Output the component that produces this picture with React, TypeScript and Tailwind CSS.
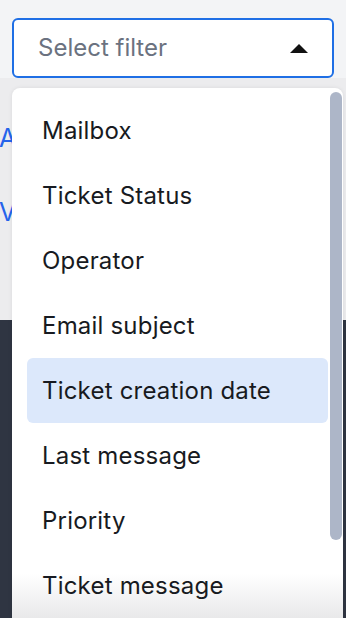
const OPTIONS = [
  "Mailbox",
  "Ticket Status",
  "Operator",
  "Email subject",
  "Ticket creation date",
  "Last message",
  "Priority",
  "Ticket message",
];

const ACTIVE = 4;

export default function App() {
  return (
    <div
      className="relative w-[346px] h-[618px] overflow-hidden bg-[#f3f4f6]"
      style={{ fontFamily: "Inter, 'Noto Sans', sans-serif" }}
    >
      {/* page behind the menu */}
      <div className="flex flex-col h-full">
        <div className="px-3 pt-[18px]">
          <div className="flex items-center justify-between h-[60px] rounded-md border-2 border-[#1f6fe5] bg-white pl-6 pr-6">
            <span className="text-[24px] text-[#6b7280]">Select filter</span>
            <span className="w-0 h-0 border-l-[9px] border-r-[9px] border-b-[9px] border-l-transparent border-r-transparent border-b-[#111]" />
          </div>
        </div>
        <div className="flex flex-col gap-[36px] pt-[42px] h-[242px] bg-[#ececee] text-[25px] text-[#2563eb] whitespace-nowrap">
          <span className="-ml-px">Add filter</span>
          <span className="-ml-px">View all</span>
        </div>
        <div className="flex-1 bg-[#2f3542]" />
      </div>

      {/* dropdown menu */}
      <div className="absolute left-3 right-[3px] top-[88px] bottom-0 rounded-t-lg bg-white shadow-[0_0_4px_rgba(0,0,0,0.08)]">
        <div className="absolute left-0 right-0 bottom-0 h-[44px] bg-gradient-to-b from-white to-[#e9e9ea]" />
        <ul className="relative flex flex-col px-[15px] pt-[10px]">
          {OPTIONS.map((o, i) => (
            <li
              key={o}
              className={`flex items-center h-[65px] pl-[15px] rounded-md text-[24px] tracking-[0.2px] text-[#171a21] ${
                i === ACTIVE ? "bg-[#dce8fb]" : ""
              }`}
            >
              {o}
            </li>
          ))}
        </ul>
        <div className="absolute right-[1px] top-[4px] w-[12px] h-[448px] rounded-full bg-[#adb6c8]" />
      </div>
    </div>
  );
}
